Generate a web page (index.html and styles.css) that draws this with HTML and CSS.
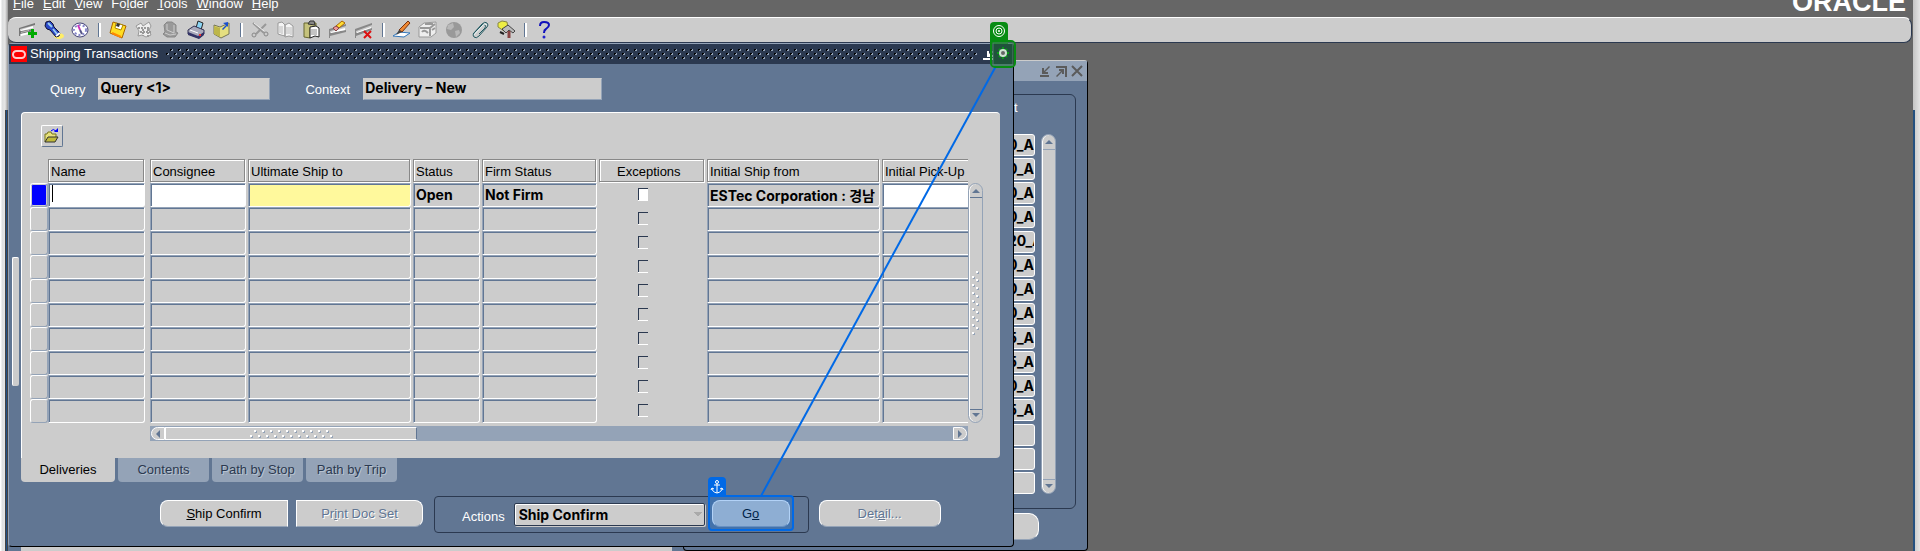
FILE: index.html
```
<!DOCTYPE html>
<html lang="en">
<head>
<meta charset="utf-8">
<title>Shipping Transactions</title>
<link rel="stylesheet" href="styles.css">
</head>
<body>
<svg class="defs" width="0" height="0" aria-hidden="true">
  <defs>
    <pattern id="grip-dark" width="8" height="12" patternUnits="userSpaceOnUse">
      <path fill="#94a3b7" d="M5 1h2v2h-2zM1 5h2v2h-2zM5 9h2v2h-2z"/>
      <path fill="#000" d="M4 1h2v1h-2zM4 1h1v2h-1zM0 5h2v1h-2zM0 5h1v2h-1zM4 9h2v1h-2zM4 9h1v2h-1z"/>
    </pattern>
    <pattern id="grip-light" width="8" height="8" patternUnits="userSpaceOnUse">
      <path fill="#94a3b7" d="M5 1h2v2h-2zM1 6h2v2h-2z"/>
      <path fill="#fff" d="M4 0h2v2h-2zM0 5h2v2h-2z"/>
    </pattern>
  </defs>
</svg>

<div class="desktop">
  <nav class="menubar">
    <div class="menus">
      <button><u>F</u>ile</button><button><u>E</u>dit</button><button><u>V</u>iew</button><button>Fo<u>l</u>der</button><button><u>T</u>ools</button><button><u>W</u>indow</button><button><u>H</u>elp</button>
    </div>
    <span class="brand">ORACLE</span>
  </nav>

  <div class="toolbar" role="toolbar" aria-label="Main">
    <button aria-label="New"><svg viewBox="0 0 20 20"><path fill="#777" d="M1 8l16-5v2L2 9v2l14-2v2L2 14v2H1z"/><path fill="#fff" d="M3 10l12-4v2L3 11zM3 14l8-2v2l-8 2z"/><path fill="#bbb" d="M3 12l8-2v1l-8 2z"/><path fill="#0a0" d="M13 9h3v3h3v3h-3v3h-3v-3h-3v-3h3z"/></svg></button>
    <button aria-label="Find"><svg viewBox="0 0 20 20"><ellipse cx="15" cy="16" rx="5" ry="3" fill="#fe6"/><path fill="#2a49c8" stroke="#113" d="M2 2l4-1 3 3 1 3 6 6-1 3-3 1-6-7-3-1-2-3z"/><path stroke="#9ce" stroke-width="2" d="M4 3l4 4M9 9l4 5"/><path stroke="#fff" stroke-width="2" d="M12 16l4-3"/></svg></button>
    <button aria-label="Show navigator"><svg viewBox="0 0 20 20"><ellipse cx="10" cy="10" rx="8" ry="7" fill="#fff" stroke="#447"/><ellipse cx="10" cy="10" rx="6" ry="5" fill="none" stroke="#88c" stroke-width="2" stroke-dasharray="2 2"/><path stroke="#c3b" stroke-width="2" d="M8 5l2 5"/><path stroke="#558" stroke-width="2" d="M10 10l2 4"/></svg></button>
    <i class="sep"></i>
    <button aria-label="Save"><svg viewBox="0 0 20 20"><path fill="#fd2" stroke="#a60" d="M5 2l13 4-4 12-12-5z"/><path fill="#fff" stroke="#a80" d="M8 3l7 2-2 5-6-2z"/><path fill="#333" d="M9 3l3 1-1 3-3-1z"/><path stroke="#f80" stroke-width="2" d="M4 13l9 4"/></svg></button>
    <button aria-label="Next step"><svg viewBox="0 0 20 20"><path fill="#eee" stroke="#999" d="M2 6l5-3 2 3 6-4 2 4-2 4 2 5-5 2-4-2-4 1 1-5z"/><path stroke="#999" stroke-width="2" fill="none" stroke-dasharray="2 1" d="M4 8h11M6 12h11M9 9v7M14 9v8"/></svg></button>
    <button aria-label="Switch responsibility"><svg viewBox="0 0 20 20"><path fill="#999" stroke="#888" d="M4 5l3-3h5l4 3v7l2 1-3 4H7l-4-3 2-2z"/><path stroke="#ccc" fill="none" d="M7 4v6l7 3V5M5 13l5 2 6-1"/></svg></button>
    <button aria-label="Print"><svg viewBox="0 0 20 20"><path fill="#8bd5f5" stroke="#222" d="M10 8l2-7 5 2-2 7z"/><path fill="#aab" stroke="#335" d="M2 10l6-4 10 4v4l-5 4-11-4z"/><path fill="#336" d="M2 12l10 4 6-4v3l-5 4-11-4z"/><path stroke="#fff" d="M4 10l8 3"/><path fill="#e33" d="M13 14h2v2h-2z"/></svg></button>
    <button aria-label="Close form"><svg viewBox="0 0 20 20"><path fill="#e5df80" stroke="#775" d="M2 5l6 2 9-4v11l-8 4-7-4z"/><path fill="#bdb64a" d="M2 6l6 2v9l-6-3z"/><path fill="#1a4fd0" d="M11 3l5-1v5l-1-1-4 4-1-1 4-4z"/></svg></button>
    <i class="sep"></i>
    <button aria-label="Cut"><svg viewBox="0 0 20 20"><path fill="none" stroke="#999" stroke-width="2" d="M3 3l11 10M16 4L6 14"/><path stroke="#eee" d="M4 3l10 8"/><circle cx="4" cy="15" r="2" fill="none" stroke="#888"/><circle cx="16" cy="14" r="2" fill="none" stroke="#888"/></svg></button>
    <button aria-label="Copy"><svg viewBox="0 0 20 20"><path fill="#f4f4f4" stroke="#999" d="M2 3l4-1 3 3v11l-4-1-3-1zM9 5l4-2 4 3v11l-4-1-4 1z"/><path stroke="#bbb" d="M4 6v7M6 6v8M11 7v7M13 7v7M15 7v8"/></svg></button>
    <button aria-label="Paste"><svg viewBox="0 0 20 20"><path fill="#c5c27c" stroke="#666630" d="M2 3h12v3L8 8v10l-6-1z"/><path fill="#888" stroke="#333" d="M6 4l2-3h4l1 4z"/><path fill="#fff" stroke="#222" d="M8 7l6-1 3 2v9l-4-1-5 2z"/><path stroke="#888" d="M10 9v6M12 9v6M14 9v6"/></svg></button>
    <button aria-label="Clear record"><svg viewBox="0 0 20 20"><path fill="#888" d="M1 9l17-5v2L2 11v2l16-3v2L2 16v2H1z"/><path fill="#fff" d="M3 12l14-4v2L3 13z"/><path fill="#fd3" stroke="#a60" d="M8 6l6-5 3 2-6 5z"/><path fill="#e99" stroke="#844" d="M5 8l3-2 3 2-3 3z"/></svg></button>
    <button aria-label="Delete"><svg viewBox="0 0 20 20"><path fill="#888" d="M1 9l17-6v2L2 11v2l16-5v2L2 16v2H1z"/><path fill="#fff" d="M3 12l14-5v1L3 13z"/><path stroke="#d11" stroke-width="2" d="M10 11l7 7M17 11l-7 7"/></svg></button>
    <i class="sep"></i>
    <button aria-label="Edit field"><svg viewBox="0 0 20 20"><path fill="#fff" stroke="#37b" d="M1 16l6-4 11 1-6 4z"/><path fill="#e83" stroke="#731" d="M7 10l9-9 2 2-8 9z"/><path fill="#444" d="M4 15l3-5 3 2z"/></svg></button>
    <button aria-label="Zoom"><svg viewBox="0 0 20 20"><path fill="#eee" stroke="#999" d="M1 7l5-4 12-1v11l-5 4H1z"/><path stroke="#999" fill="none" stroke-width="2" d="M2 8h10l5-4M12 8v8M4 12q2-3 6 1M14 10l3-2M7 4h8"/></svg></button>
    <button aria-label="Translations"><svg viewBox="0 0 20 20"><circle cx="10" cy="10" r="8" fill="#999"/><path fill="#b8b8b8" d="M4 5l5-2 1 4-3 3-4-1zM11 11l4-1 1 3-4 4z"/></svg></button>
    <button aria-label="Attachments"><svg viewBox="0 0 20 20"><g fill="none" stroke="#245a62"><path d="M3 14l9-10q3-3 5-1 2 2 0 4l-8 9q-3 3-5 1-2-2 0-4l8-8q2-2 3 0 1 1 0 3l-6 6"/></g><path fill="none" stroke="#e6f4f4" d="M4 15l9-10q2-2 4 0"/></svg></button>
    <button aria-label="Folder tools"><svg viewBox="0 0 20 20"><path fill="#ee4" stroke="#884" d="M2 3l4-2 5 1 1 6-4 3-6-4z"/><path fill="#bbb" stroke="#444" d="M6 9l6-4 7 6-2 2-4-3-3 3z"/><path stroke="#844" stroke-width="3" d="M13 11v7"/><path stroke="#222" stroke-width="2" d="M4 12l4 2"/></svg></button>
    <i class="sep"></i>
    <button aria-label="Help"><svg viewBox="0 0 20 20"><path fill="none" stroke="#11b" stroke-width="2" d="M6 6q0-4 4-4 5 0 5 3 0 2-3 4-2 1-2 4"/><circle cx="10" cy="17" r="1.500" fill="#22c"/></svg></button>
  </div>

  <div class="edge edge-left"></div>
  <div class="edge edge-right"></div>

  <section class="window navigator" aria-label="Navigator"><div class="navigator-panel"></div></section>

  <section class="window back" aria-label="Source window">
    <header class="back-title">
      <svg class="winicon" viewBox="0 0 12 12"><path fill="#5b5b5b" d="M1 10h9v2H1zM3 3h2v3l5-5 1 1-5 5h3v2H3z"/></svg>
      <svg class="winicon" viewBox="0 0 12 12"><path fill="#5b5b5b" d="M1 1h11v11h-2V3H1zM4 4h5v5H7V7l-5 5-1-1 5-5H4z"/></svg>
      <svg class="winicon" viewBox="0 0 12 12"><path stroke="#5b5b5b" stroke-width="2" d="M1 1l10 10M11 1L1 11"/></svg>
    </header>
    <div class="back-frame">
      <div class="back-label">t</div>
      <div class="back-grid">
        <div class="back-cells" id="back-cells"></div>
        <div class="vscroll vscroll-back"><b class="tri up"></b><b class="tri down"></b></div>
      </div>
    </div>
    <button class="btn back-btn" aria-label="More"></button>
  </section>

  <section class="window front" aria-label="Shipping Transactions">
    <header class="title">
      <svg class="o-badge" viewBox="0 0 16 16"><path fill="#f00" d="M0 0h16v16H0z"/><rect x="2" y="5" width="12" height="7" rx="3.500" fill="none" stroke="#fcc" stroke-width="2"/></svg>
      <span>Shipping Transactions</span>
      <svg class="title-grip"><rect width="100%" height="12" fill="url(#grip-dark)"/></svg>
      <svg class="winicon" viewBox="0 0 12 12"><path fill="#fff" d="M0 10h10v2H0zM4 3h2v3l3-3 1 1-3 3h3v2H4z"/></svg>
    </header>
    <div class="body">
      <div class="handle"></div>
      <div class="fields">
        <label for="query">Query</label><input id="query" class="field query" value="Query &lt;1&gt;" readonly>
        <label for="context">Context</label><input id="context" class="field context" value="Delivery – New" readonly>
      </div>

      <div class="panel">
        <button class="folder" aria-label="Open folder"><svg viewBox="0 0 16 16"><path fill="#e8e27a" stroke="#77751a" d="M1 14V6h2l1-2h3l1 2h4v3"/><path fill="#c0ba3c" stroke="#333" d="M1 14l3-5h10l-3 5z"/><path fill="none" stroke="#00f" stroke-width="1" d="M7 3q2-3 5 0"/><path fill="#00f" d="M14 0v4h-4z"/></svg></button>
        <div class="grid-area">
          <div class="table-clip">
            <table>
              <colgroup><col class="c-sel"><col class="c-name"><col class="c-cons"><col class="c-ult"><col class="c-stat"><col class="c-firm"><col class="c-exc"><col class="c-ship"><col class="c-pick"></colgroup>
              <thead><tr><td></td><th class="wide-gap"><span>Name</span></th><th><span>Consignee</span></th><th><span>Ultimate Ship to</span></th><th><span>Status</span></th><th><span>Firm Status</span></th><th><span class="mid">Exceptions</span></th><th><span>Initial Ship from</span></th><th><span>Initial Pick-Up Date</span></th></tr></thead>
              <tbody id="rows"></tbody>
            </table>
          </div>
          <div class="vscroll"><b class="tri up"></b><svg class="grip-v"><rect width="8" height="64" fill="url(#grip-light)"/></svg><b class="tri down"></b></div>
        </div>
        <div class="hscroll">
          <b class="cap cap-l"></b><div class="thumb"><svg class="grip-h"><rect width="84" height="8" fill="url(#grip-light)"/></svg></div><b class="cap cap-r"></b>
        </div>
      </div>

      <div class="tabs" role="tablist">
        <button class="tab active" role="tab" aria-selected="true">Deliveries</button>
        <button class="tab" role="tab">Contents</button>
        <button class="tab" role="tab">Path by Stop</button>
        <button class="tab" role="tab">Path by Trip</button>
      </div>

      <div class="actions">
        <button class="btn ship"><u>S</u>hip Confirm</button>
        <button class="btn print off">Pr<u>i</u>nt Doc Set</button>
        <div class="action-box">
          <label for="act">Actions</label>
          <select id="act"><option>Ship Confirm</option></select>
          <div class="go-wrap">
            <button class="btn go">G<u>o</u></button>
            <div class="go-mark"></div>
            <svg class="tag-anchor" viewBox="0 0 18 20"><path fill="#0069e6" d="M0 20V4q0-4 4-4h10q4 0 4 4v16z"/><g fill="none" stroke="#fff"><circle cx="9" cy="5" r="1.500"/><path d="M9 7v9M6 8h6M4 11q0 4 5 5 5-1 5-5M3 13l1-2 2 1M15 13l-1-2-2 1"/></g></svg>
          </div>
        </div>
        <button class="btn detail off">Det<u>a</u>il...</button>
      </div>
    </div>
  </section>

  <svg class="wire" aria-hidden="true"><path stroke="#0069e6" stroke-width="2" d="M761 496L996 66"/></svg>
  <svg class="target" viewBox="0 0 26 46" aria-hidden="true">
    <path fill="#078c12" d="M0 22V4q0-4 4-4h10q4 0 4 4v18z"/>
    <g fill="none" stroke="#fff"><circle cx="9" cy="9" r="5.500"/><circle cx="9" cy="9" r="3"/></g><circle cx="9" cy="9" r="1" fill="#fff"/>
    <rect x="1" y="19" width="24" height="26" rx="4" fill="#078c12" fill-opacity=".3" stroke="#078c12" stroke-width="2"/>
    <rect x="3" y="21" width="20" height="22" fill="none" stroke="#53806f"/>
    <path stroke="#0a9a18" stroke-width="2" d="M13 25v12M7 31h12M9 27l8 8M17 27l-8 8"/>
    <circle cx="13" cy="31" r="3" fill="#666" stroke="#cfe3d2" stroke-width="2"/>
  </svg>
</div>
<script src="app.js"></script>
</body>
</html>
```

FILE: styles.css
```
* { box-sizing: border-box; }
body { margin: 0; }
body, button, input, select { font: 13px/16px "Liberation Sans", "Noto Sans CJK KR", sans-serif; }
button { padding: 0; border: 0; background: none; color: inherit; }
svg { display: block; }
.defs { position: absolute; }

.desktop { position: relative; height: 100vh; min-height: 551px; overflow: hidden; background: #666; }

.menubar { display: flex; justify-content: space-between; align-items: flex-end; height: 17px; padding: 0 14px 5px 13px; color: #fff; overflow: hidden; }
.menus { display: flex; gap: 9px; }
.brand { font-size: 27px; font-weight: bold; line-height: 20px; }

.toolbar { display: flex; align-items: center; height: 26px; margin: 0 8px; padding-left: 7px; background: #ccc; border-top: 1px solid #fff; border-bottom: 1px solid #2b3950; border-right: 1px solid #2b3950; border-radius: 8px; }
.toolbar button { width: 26px; height: 20px; }
.toolbar button svg { width: 20px; height: 20px; margin: 0 auto; }
.sep { width: 12px; height: 14px; padding: 0 5px; }
.sep::before { content: ""; display: block; width: 2px; height: 14px; border-left: 1px solid #617693; background: #fff; }

.edge { position: absolute; top: 0; bottom: 0; }
.edge-left { left: 0; width: 8px; background: linear-gradient(#1f4f86, #1f4f86) 6px 110px / 1px 100% no-repeat, linear-gradient(#444, #444) 5px 110px / 3px 100% no-repeat, linear-gradient(90deg, #fff 1px, #dcdedf 2px, #e6e6e6 5px, #999 8px); }
.edge-right { right: 0; width: 7px; background: linear-gradient(#24507f, #24507f) 0 110px / 2px 100% no-repeat, linear-gradient(90deg, #c4c4c4, #e4e4e4); }

.window { position: absolute; background: #617693; }
.navigator { left: 8px; top: 440px; width: 676px; height: 120px; padding: 10px 12px 0 13px; }
.navigator-panel { height: 110px; background: #ccc; }

.back { left: 683px; top: 60px; width: 405px; height: 491px; border: 1px solid #000; border-top-color: #ccc; border-radius: 4px; }
.back-title { display: flex; justify-content: flex-end; align-items: center; gap: 4px; height: 20px; padding-right: 4px; background: #94a3b7; }
.winicon { width: 12px; height: 12px; flex: none; }
.back-frame { margin: 13px 11px 0 20px; height: 415px; border: 1px solid #2b3950; border-radius: 6px; }
.back-label { padding: 5px 0 0 309px; height: 39px; color: #fff; }
.back-grid { display: flex; justify-content: flex-end; gap: 6px; padding-right: 19px; }
.back-cells { display: grid; gap: 2px; width: 33px; }
.back-cells input { width: 100%; height: 22px; padding: 0 0 2px 5px; font: bold 14px/18px Inter, sans-serif; color: #000; background: #ccc; border: 1px solid #fff; border-radius: 3px; }
.back-btn { display: block; width: 120px; height: 27px; margin: 4px 0 0 235px; border-radius: 10px; }

.front { left: 8px; top: 43px; width: 1006px; border: 1px solid #000; border-left-color: #94a3b7; border-top-color: #94a3b7; border-radius: 4px; }
.title { display: flex; align-items: center; height: 20px; padding: 0 18px 0 2px; background: #2b3950; color: #fff; }
.title span { margin: 0 8px 0 3px; }
.o-badge { width: 16px; height: 16px; }
.title-grip { flex: 1; height: 12px; margin-right: 6px; }

.body { position: relative; padding: 14px 13px 13px 12px; }
.handle { position: absolute; left: 3px; top: 193px; width: 7px; height: 129px; background: #ccc; border-left: 1px solid #fff; border-top: 1px solid #fff; border-radius: 2px; }
.fields { display: flex; align-items: center; padding-left: 29px; color: #fff; }
.fields label { padding-top: 2px; }
.field { height: 22px; padding: 0 2px 3px 1px; font: bold 14px/18px Inter, sans-serif; background: #ccc; border: 1px solid #94a3b7; border-top-color: #ccc; border-left-color: #ccc; outline: 0; border-radius: 0; }
.query { width: 172px; margin: 0 35px 0 13px; }
.context { width: 239px; margin-left: 13px; }

.panel { margin-top: 12px; padding: 12px 17px 17px 8px; background: #ccc; border-top: 1px solid #fff; border-left: 1px solid #fff; border-radius: 4px 4px 4px 0; }
.folder { display: block; width: 22px; height: 22px; margin-left: 11px; padding: 2px; border: 1px solid #fff; border-right-color: #617693; border-bottom-color: #617693; border-radius: 2px; }
.folder svg { width: 16px; height: 16px; }
.grid-area { display: flex; align-items: flex-end; margin-top: 12px; }
.table-clip { flex: 1; min-width: 0; overflow: hidden; }

table { width: 988px; table-layout: fixed; border-spacing: 0; }
.c-sel { width: 18px; }
.c-name { width: 102px; }
.c-cons { width: 98px; }
.c-ult { width: 165px; }
.c-stat { width: 69px; }
.c-firm { width: 117px; }
.c-exc { width: 108px; }
.c-ship { width: 175px; }
.c-pick { width: 136px; }
th, td { height: 24px; padding: 0 2px 0 0; font-weight: normal; text-align: left; white-space: nowrap; }
td:first-child { padding: 0; }
th.wide-gap, td.wide-gap { padding-right: 5px; }
th span { display: block; height: 23px; margin: 0 1px 1px 0; padding: 4px 2px 1px; line-height: 16px; border: 1px solid #888; box-shadow: inset 1px 1px #fff, 1px 1px #fff; }
th .mid { padding-left: 17px; }
td input[type="text"] { display: block; width: 100%; height: 24px; padding: 0 2px 1px 2px; font: bold 14px/18px Inter, "Noto Sans CJK KR", sans-serif; color: #000; background: #ccc; border: 1px solid #fff; border-top-color: #94a3b7; border-left-color: #94a3b7; border-radius: 0 0 3px 0; box-shadow: inset 1px 1px #617693; outline: 0; }
td input.open { background: #fff; }
td input.required { background: #fff99c; }
td input.cursor { background: linear-gradient(#000, #000) 3px 1px / 1px 17px no-repeat #fff; }
.sel { display: block; width: 18px; height: 24px; border: 1px solid #fff; border-bottom-color: #94a3b7; border-right-color: #94a3b7; border-radius: 3px; }
.sel.current { background: #00f; box-shadow: inset 0 0 0 1px #ccc; }
input[type="checkbox"] { appearance: none; display: block; width: 10px; height: 12px; margin: 0 0 2px 39px; border: solid #2b3950; border-width: 1px 0 0 1px; box-shadow: 0 1px #fff; border-radius: 0; }
input[type="checkbox"].open { background: #fff; }

.vscroll { position: relative; flex: none; display: flex; flex-direction: column; justify-content: space-between; align-items: center; width: 15px; height: 240px; padding: 5px 0; border: 1px solid #94a3b7; border-radius: 8px; background: linear-gradient(#617693, #617693) 0 13px / 100% 1px no-repeat, linear-gradient(#617693, #617693) 0 225px / 100% 1px no-repeat, #ccc; box-shadow: inset 1px 0 #fff; }
.vscroll-back { height: 360px; background: linear-gradient(#94a3b7, #94a3b7) 0 14px / 100% 1px no-repeat, linear-gradient(#94a3b7, #94a3b7) 0 344px / 100% 1px no-repeat, #ccc; }
.tri { width: 0; height: 0; border: 4px solid transparent; }
.up { border-top: 0; border-bottom-color: #617693; }
.down { border-bottom: 0; border-top-color: #617693; }
.grip-v { width: 8px; height: 64px; }
.hscroll { display: flex; justify-content: space-between; height: 15px; margin: 3px 15px 0 120px; padding: 1px; background: #94a3b7; }
.cap { display: grid; place-items: center; width: 14px; background: #ccc; border: 1px solid #fff; }
.cap::before { content: ""; border: 4px solid transparent; }
.cap-l { border-radius: 7px 0 0 7px; }
.cap-l::before { border-left: 0; border-right-color: #617693; }
.cap-r { border-radius: 0 7px 7px 0; }
.cap-r::before { border-right: 0; border-left-color: #617693; }
.thumb { width: 252px; margin-right: auto; padding: 2px 0 0 84px; background: #ccc; border: 1px solid #fff; border-right-color: #617693; }
.grip-h { width: 84px; height: 8px; }

.tabs { display: flex; gap: 3px; }
.tab { width: 91px; height: 24px; color: #2b3950; background: #94a3b7; border-radius: 0 0 4px 4px; text-shadow: 1px 1px #b9c3d0; }
.tab.active { width: 94px; color: #000; background: #ccc; text-shadow: none; }

.actions { display: flex; align-items: flex-start; margin: 14px 0 0 139px; }
.btn { height: 27px; margin-top: 4px; background: #ccc; border: 1px solid #fff; border-bottom-color: #94a3b7; }
.ship { width: 128px; border-radius: 8px 0 0 8px; }
.print { width: 127px; margin-left: 8px; border-radius: 0 8px 8px 0; }
.off { color: #617693; text-shadow: 1px 1px #fff; }
.action-box { display: flex; margin-left: 11px; padding: 0 18px 0 27px; height: 37px; border: 1px solid #2b3950; border-radius: 4px; color: #fff; }
.action-box label { padding: 12px 9px 0 0; }
select { appearance: none; width: 191px; height: 23px; margin-top: 6px; padding: 0 4px; font: bold 14px/18px Inter, sans-serif; color: #000; background: conic-gradient(from 315deg at 50% 100%, #aaa 90deg, transparent 0) 179px 8px / 8px 4px no-repeat, #ccc; border: 1px solid #2b3950; border-radius: 2px; box-shadow: inset 1px 1px #fff, 1px 1px #ccc; }
.go-wrap { position: relative; margin: -1px 0 0 7px; }
.go { width: 78px; border-radius: 8px; color: #000; }
.go-mark { position: absolute; left: -4px; top: -1px; width: 86px; height: 36px; border: 2px solid #0069e6; border-radius: 0 4px 4px 4px; background: rgba(0, 105, 230, .3); pointer-events: none; }
.tag-anchor { position: absolute; left: -4px; top: -19px; width: 18px; height: 20px; }
.detail { width: 122px; margin-left: 10px; border-radius: 8px; }

.wire { position: absolute; left: 0; top: 0; width: 1100px; height: 551px; pointer-events: none; }
.target { position: absolute; left: 990px; top: 22px; width: 26px; height: 46px; }
```

FILE: app.js
```
const columns = ["Name", "Consignee", "Ultimate Ship to", "Status", "Firm Status", "Exceptions", "Initial Ship from", "Initial Pick-Up Date"];
const first = {
  "Name": { cls: "cursor" },
  "Consignee": { cls: "open" },
  "Ultimate Ship to": { cls: "required" },
  "Status": { value: "Open" },
  "Firm Status": { value: "Not Firm" },
  "Exceptions": { cls: "open" },
  "Initial Ship from": { value: "ESTec Corporation : 경남" },
  "Initial Pick-Up Date": { cls: "open" }
};
const body = document.getElementById("rows");
for (let r = 0; r < 10; r++) {
  const tr = body.insertRow();
  tr.insertCell().innerHTML = `<span class="sel${r === 0 ? " current" : ""}"></span>`;
  for (const name of columns) {
    const cell = (r === 0 && first[name]) || {};
    const td = tr.insertCell();
    if (name === "Name") td.className = "wide-gap";
    const input = document.createElement("input");
    input.type = name === "Exceptions" ? "checkbox" : "text";
    input.className = cell.cls || "";
    if (cell.value) input.value = cell.value;
    input.setAttribute("aria-label", `${name}, row ${r + 1}`);
    td.append(input);
  }
}

const codes = ["0_AA", "0_AA", "0_AA", "0_AA", "20_A", "0_AA", "0_AA", "0_AA", "5_AA", "5_AA", "0_AA", "5_AA", "", "", ""];
const cells = document.getElementById("back-cells");
codes.forEach((code, i) => {
  const input = document.createElement("input");
  input.value = code;
  input.setAttribute("aria-label", `Item ${i + 1}`);
  cells.append(input);
});
```
